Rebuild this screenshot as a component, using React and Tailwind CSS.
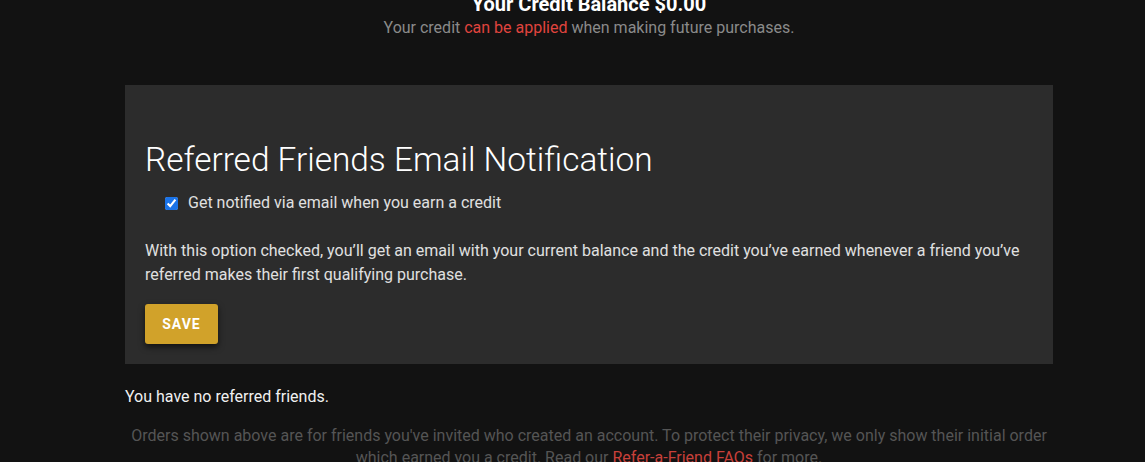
import React, { useState } from 'react';

function App() {
  const [notify, setNotify] = useState(true);

  return (
    <div className="w-full min-h-screen bg-[#121212] font-['Roboto',sans-serif] pl-[33px] overflow-hidden">
      <div className="w-[928px] mx-auto">
        {/* Credit balance */}
        <div className="text-center -mt-[8px]">
          <h2 className="text-[20px] leading-[24px] font-bold text-white">Your Credit Balance $0.00</h2>
          <p className="text-[16px] leading-[24px] text-[#8a8a8a]">
            Your credit <span className="text-[#e0443e]">can be applied</span> when making future purchases.
          </p>
        </div>

        {/* Notification card */}
        <div className="mt-[45px] bg-[#2c2c2c] px-5 pt-[51px] pb-5">
          <h3 className="text-[33.4px] leading-[48px] font-light text-white">Referred Friends Email Notification</h3>
          <label className="mt-[7px] ml-5 flex items-center gap-[10px] text-[16px] leading-[24px] text-[#e0e0e0]">
            <input
              type="checkbox"
              checked={notify}
              onChange={(e) => setNotify(e.target.checked)}
              className="w-[13px] h-[13px] accent-[#1a73e8]"
            />
            Get notified via email when you earn a credit
          </label>
          <p className="mt-[24px] text-[16px] leading-[24px] text-[#e0e0e0]">
            With this option checked, you’ll get an email with your current balance and the credit you’ve earned whenever a friend you’ve referred makes their first qualifying purchase.
          </p>
          <button className="mt-[17px] w-[73px] h-[40px] rounded-[3px] bg-[#d1a22a] text-white text-[14px] font-bold tracking-[1px] shadow-[0_3px_6px_rgba(0,0,0,0.6)]">
            SAVE
          </button>
        </div>

        <p className="mt-[21px] text-[16px] leading-[24px] text-[#f0f0f0]">You have no referred friends.</p>
        <p className="mt-[16px] text-center text-[16px] leading-[22px] text-[#555555] px-1">
          Orders shown above are for friends you've invited who created an account. To protect their privacy, we only show their initial order which earned you a credit. Read our <span className="text-[#c8403a]">Refer-a-Friend FAQs</span> for more.
        </p>
      </div>
    </div>
  );
}

export default App;
